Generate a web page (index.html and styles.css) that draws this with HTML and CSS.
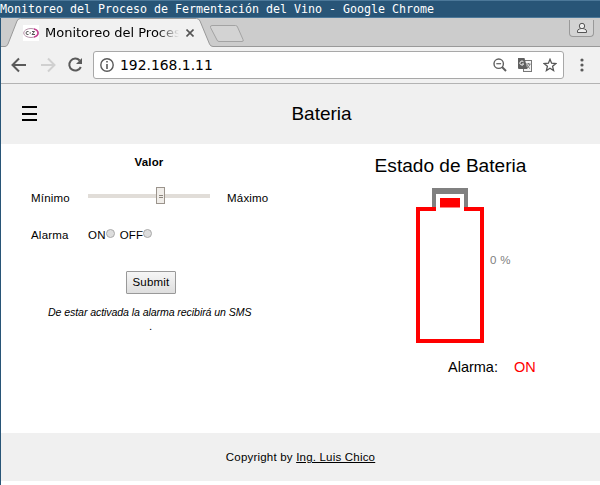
FILE: index.html
```html
<!DOCTYPE html>
<html lang="es">
<head>
<meta charset="utf-8">
<title>Monitoreo del Proceso de Fermentación del Vino</title>
<link rel="stylesheet" href="styles.css">
</head>
<body>
<div class="window">
  <div class="titlebar"><span class="title-text">Monitoreo del Proceso de Fermentación del Vino - Google Chrome</span></div>
  <div class="tabstrip">
    <svg class="tab-shapes" width="599" height="29" viewBox="1 18 599 29">
      <path d="M1 46.5H5Q7 46.500 8 44L17 21Q18 18.500 20.500 18.500H196.500Q199 18.500 200 21L209.500 44Q210.500 46.500 213 46.500H600V48H1Z" fill="#f1f1f1"/>
      <path d="M1 46.5H5Q7 46.500 8 44L17 21Q18 18.500 20.500 18.500H196.500Q199 18.500 200 21L209.500 44Q210.500 46.500 213 46.500H600" fill="none" stroke="#999"/>
      <path d="M212 25.500H235.500Q237 25.500 237.500 27L243 39.500Q244 41.500 242 41.500H219Q217.500 41.500 217 40L210.500 27.500Q210 25.500 212 25.500Z" fill="#d3d3d3" stroke="#a3a3a3"/>
    </svg>
    <div class="tab">
      <svg class="favicon" width="16" height="16" viewBox="0 0 16 16">
        <rect width="16" height="16" fill="#fff"/>
        <ellipse cx="8" cy="8" rx="7.300" ry="4.500" fill="#fff" stroke="#b691a9"/>
        <path d="M11 4Q15 5 15 8T11 12" fill="none" stroke="#c63f91" stroke-width="1.500"/>
        <path d="M5.500 6.500Q3 6 3 8T5.500 9.500M6.500 8H8M9 6.500H11.500L9 9.500H12" fill="none" stroke="#555"/>
      </svg>
      <span class="tab-title">Monitoreo del Proces</span>
      <svg width="8" height="8" viewBox="0 0 8 8"><path d="M.5 .5L7.500 7.500M7.500 .5L.5 7.500" stroke="#555" stroke-width="1.600"/></svg>
    </div>
    <div class="profile">
      <svg width="12" height="12" viewBox="0 0 12 12" fill="#eee" stroke="#555"><path d="M1.500 10.500V9Q1.500 7.500 3.500 7L5 6.500H7L8.500 7Q10.500 7.500 10.500 9V10.500Z"/><circle cx="6" cy="4" r="2.700"/></svg>
    </div>
  </div>
  <div class="toolbar">
    <svg class="back" width="16" height="16" viewBox="0 0 16 16"><path d="M15 8H2.500M8 1.500L1.500 8L8 14.500" fill="none" stroke="#5a5a5a" stroke-width="2"/></svg>
    <svg class="forward" width="16" height="16" viewBox="0 0 16 16"><path d="M1 8H13.500M8 1.500L14.500 8L8 14.500" fill="none" stroke="#d0d0d0" stroke-width="2"/></svg>
    <svg class="reload" width="16" height="16" viewBox="0 0 16 16"><path d="M12.700 3.500A6 6 0 1 0 13.800 10" fill="none" stroke="#5a5a5a" stroke-width="2"/><path d="M15 1V7H9Z" fill="#5a5a5a"/></svg>
    <div class="omnibox">
      <svg width="14" height="14" viewBox="0 0 14 14"><circle cx="7" cy="7" r="6.200" fill="none" stroke="#5a5a5a" stroke-width="1.400"/><path d="M7 3V4.600M7 6V11" stroke="#5a5a5a" stroke-width="1.600"/></svg>
      <span class="url">192.168.1.11</span>
      <svg width="14" height="14" viewBox="0 0 14 14" fill="none" stroke="#5f5f5f"><circle cx="5.700" cy="5.700" r="4.700" stroke-width="1.400"/><path d="M9 9L13 13" stroke-width="1.900"/><path d="M3.300 5.700H8.100" stroke-width="1.200"/></svg>
      <svg class="translate" width="14" height="14" viewBox="0 0 14 14"><rect x="5.500" y="2.500" width="8" height="11" fill="#f4f4f4" stroke="#777"/><path d="M0 0H6.500L9.500 11H1Q0 11 0 10Z" fill="#606060"/><path d="M5.500 3.800A2 2 0 1 0 5.700 6H4" fill="none" stroke="#fff"/><path d="M8 6H12.500M10.500 5V6M12 6Q11 9 9 10M9 7Q10 9.500 12 10.500" fill="none" stroke="#777"/></svg>
      <svg class="star" width="14" height="14" viewBox="0 0 14 14"><path d="M7 1.300L8.600 5.200L12.900 5.500L9.600 8.300L10.600 12.500L7 10.200L3.400 12.500L4.400 8.300L1.100 5.500L5.400 5.200Z" fill="none" stroke="#555" stroke-width="1.300"/></svg>
    </div>
    <svg class="menu" width="4" height="14" viewBox="0 0 4 14" fill="#5a5a5a"><circle cx="2" cy="2" r="1.600"/><circle cx="2" cy="7" r="1.600"/><circle cx="2" cy="12" r="1.600"/></svg>
  </div>
  <header class="page-header">
    <svg class="hamburger" width="15" height="15" viewBox="0 0 15 15"><path d="M0 1H15M0 8H15M0 14H15" stroke="#000" stroke-width="2"/></svg>
    <h1>Bateria</h1>
  </header>
  <main>
    <form class="settings">
      <h2>Valor</h2>
      <div class="row range-row"><span class="label">Mínimo</span><div class="track"><div class="thumb"></div></div><span>Máximo</span></div>
      <div class="row alarm-row"><span class="label">Alarma</span><span>ON</span><i class="radio"></i><span class="off">OFF</span><i class="radio"></i></div>
      <button type="button">Submit</button>
      <p class="note">De estar activada la alarma recibirá un SMS</p>
      <p class="dot">.</p>
    </form>
    <section class="status">
      <h3>Estado de Bateria</h3>
      <div class="battery">
        <svg width="68" height="156" viewBox="0 0 68 156">
          <path d="M18 20V2.500H50V20" fill="none" stroke="#808080" stroke-width="4"/>
          <rect x="16" y="0" width="36" height="6" fill="#808080"/>
          <rect x="24" y="10" width="20" height="9.500" fill="#f00"/>
          <path d="M20 21H2V153H66V21H48" fill="none" stroke="#f00" stroke-width="4"/>
        </svg>
        <span class="percent">0 %</span>
      </div>
      <div class="alarm-status"><span>Alarma:</span><span class="on">ON</span></div>
    </section>
  </main>
  <footer>Copyright by&nbsp;<a href="#">Ing. Luis Chico</a></footer>
</div>
</body>
</html>
```
FILE: styles.css
```css
* { box-sizing: border-box; }
body { margin: 0; background: #fff; font: 11.5px "Liberation Sans", Arial, sans-serif; color: #000; overflow: hidden; }
svg { display: block; flex: none; }
h1, h2, h3, p { margin: 0; font-weight: normal; }
.window { width: 600px; height: 485px; border-left: 1px solid #285577; }
.titlebar { height: 18px; margin-left: -1px; background: #285577; border-top: 1px solid #4c7899; border-bottom: 1px solid #4c7899; color: #fff; font: 11.63px/16px "DejaVu Sans Mono", monospace; white-space: nowrap; }
.title-text { display: block; }
.tabstrip { position: relative; height: 29px; background: #ccc; display: flex; justify-content: space-between; align-items: flex-start; padding: 0 6px 0 22px; }
.tab-shapes { position: absolute; left: 0; top: 0; }
.tab { position: relative; display: flex; align-items: center; height: 29px; padding-top: 1px; }
.tab-title { width: 134px; margin: 0 7px 0 6px; white-space: nowrap; font: 13px/18px "DejaVu Sans", sans-serif; -webkit-mask-image: linear-gradient(to right, #000 112px, transparent 134px); mask-image: linear-gradient(to right, #000 112px, transparent 134px); }
.profile { position: relative; width: 25px; height: 17px; margin-top: 2px; border: 1px solid #999; border-top: 0; border-radius: 0 0 4px 4px; background: #d3d3d3; padding: 2px 0 0 6px; }
.toolbar { height: 37px; background: #f1f1f1; border-bottom: 1px solid #b3b3b3; display: flex; align-items: center; padding: 0 16px 0 10px; }
.forward { margin-left: 13px; }
.reload { margin-left: 11px; }
.omnibox { display: flex; align-items: center; width: 472px; height: 28px; margin-left: 10px; padding: 0 6px; border: 1px solid #a8a8a8; border-radius: 3px; background: #fff; }
.url { flex: 1; margin-left: 6px; font: 13.9px/20px "DejaVu Sans", sans-serif; }
.translate { margin-left: 11px; }
.star { margin-left: 11px; }
.menu { margin-left: 16px; }
.page-header { height: 60px; background: #f0f0f0; display: flex; align-items: center; padding-left: 21px; }
.hamburger { margin-top: -2px; }
.page-header h1 { flex: 1; padding-left: 6px; text-align: center; font-size: 19px; }
main { height: 289px; display: flex; }
.settings { width: 300px; padding-top: 11px; display: flex; flex-direction: column; align-items: flex-start; }
.settings h2 { width: 296px; text-align: center; font-size: 11.5px; letter-spacing: .2px; line-height: 14px; font-weight: bold; }
.row { display: flex; align-items: center; height: 16px; padding-left: 30px; letter-spacing: .2px; }
.label { width: 57px; }
.range-row { margin-top: 21px; }
.track { width: 122px; height: 4px; margin: -5px 17px 0 0; background: #e1ddd8; display: flex; align-items: center; padding-left: 68px; }
.thumb { width: 9px; height: 17px; border: 1px solid #9b948c; background: linear-gradient(#8d867e, #8d867e) 2px 7px / 4px 1px no-repeat, linear-gradient(#8d867e, #8d867e) 2px 9px / 4px 1px no-repeat, #f0ede9; }
.alarm-row { margin-top: 21px; }
.radio { width: 9px; height: 9px; margin-top: -3px; border: 1px solid #aaa; border-radius: 50%; background: #ddd; }
.off { margin-left: 5px; }
button { width: 50px; height: 23px; margin: 28px 0 0 125px; padding: 0 0 1px; border: 1px solid #999; border-radius: 1px; background: linear-gradient(#f6f6f6, #dedede); font: 11.5px "Liberation Sans", sans-serif; letter-spacing: .2px; color: #000; }
.note { margin: 11px 0 0 47px; font-size: 10.6px; letter-spacing: -.09px; line-height: 14px; font-style: italic; white-space: nowrap; }
.dot { margin: 1px 0 0 148px; line-height: 13px; }
.status { flex: 1; padding-top: 11px; }
.status h3 { text-align: center; font-size: 19.1px; line-height: 22px; }
.battery { display: flex; align-items: center; margin: 11px 0 0 115px; }
.percent { margin: -13px 0 0 6px; color: #808080; font-size: 11.5px; letter-spacing: .3px; }
.alarm-status { display: flex; margin: 15px 0 0 147px; font-size: 14.5px; line-height: 17px; }
.on { margin-left: 16px; color: #f00; }
footer { height: 48px; background: #f0f0f0; display: flex; align-items: center; justify-content: center; letter-spacing: .2px; }
footer a { color: #000; }
```
